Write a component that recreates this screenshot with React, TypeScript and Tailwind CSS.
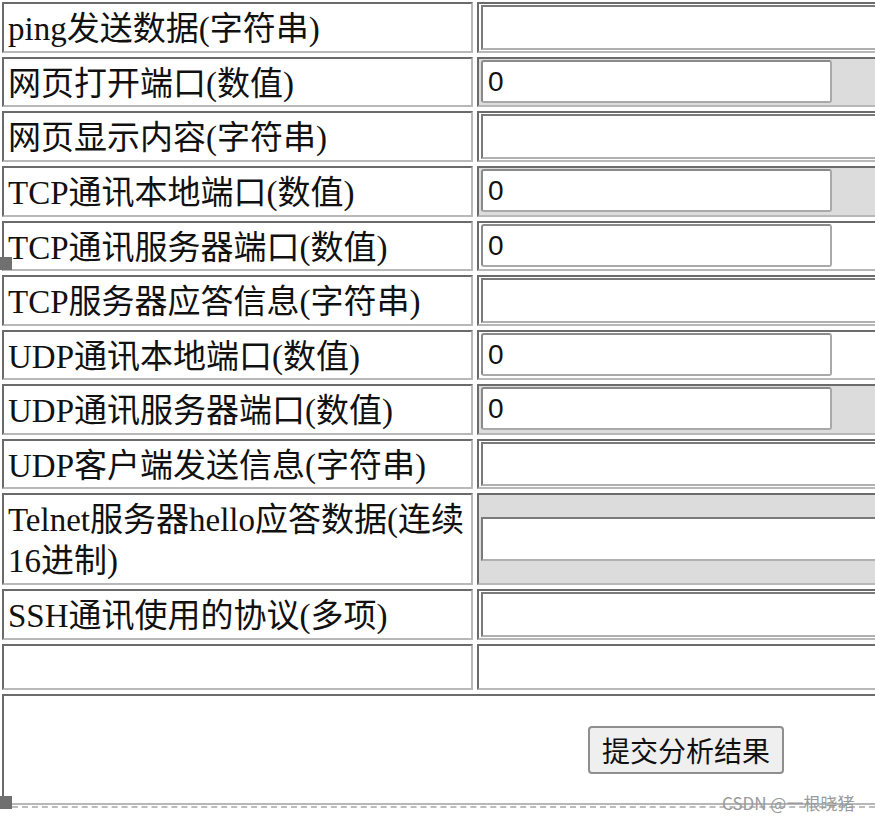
import React from 'react';

type Kind = 'text' | 'num' | 'numGrey' | 'area' | 'empty';

const rows: { label: React.ReactNode; kind: Kind }[] = [
  { label: 'ping发送数据(字符串)', kind: 'text' },
  { label: '网页打开端口(数值)', kind: 'numGrey' },
  { label: '网页显示内容(字符串)', kind: 'text' },
  { label: 'TCP通讯本地端口(数值)', kind: 'numGrey' },
  { label: 'TCP通讯服务器端口(数值)', kind: 'num' },
  { label: 'TCP服务器应答信息(字符串)', kind: 'text' },
  { label: 'UDP通讯本地端口(数值)', kind: 'num' },
  { label: 'UDP通讯服务器端口(数值)', kind: 'numGrey' },
  { label: 'UDP客户端发送信息(字符串)', kind: 'text' },
  {
    label: (
      <>
        Telnet服务器hello应答数据(连续
        <br />
        16进制)
      </>
    ),
    kind: 'area',
  },
  { label: 'SSH通讯使用的协议(多项)', kind: 'text' },
  { label: '', kind: 'empty' },
];

const cell =
  'border-2 border-t-[#6b6b6b] border-l-[#6b6b6b] border-r-[#b8b8b8] border-b-[#b8b8b8]';

const textBox =
  'border-2 border-t-[#7a7a7a] border-l-[#7a7a7a] border-r-[#cfcfcf] border-b-[#b0b0b0] bg-white';

function NumInput() {
  return (
    <div className="w-[351px] h-[43px] mt-[1px] ml-[2px] bg-white rounded-[3px] border-2 border-t-[#8a8a8a] border-l-[#8a8a8a] border-r-[#a9a9a9] border-b-[#a9a9a9] flex items-center pl-[5px] text-[28px] text-[#111] font-['Liberation_Sans',sans-serif]">
      0
    </div>
  );
}

function Field({ kind }: { kind: Kind }) {
  if (kind === 'text')
    return (
      <div className={`${cell} h-full pl-[2px] pt-[1px] pb-[1px]`}>
        <div className={`${textBox} h-full`} />
      </div>
    );
  if (kind === 'num')
    return (
      <div className={`${cell} h-full bg-white`}>
        <NumInput />
      </div>
    );
  if (kind === 'numGrey')
    return (
      <div className={`${cell} h-full bg-[#dcdcdc]`}>
        <NumInput />
      </div>
    );
  if (kind === 'area')
    return (
      <div className={`${cell} h-full bg-[#dcdcdc] flex items-center pl-[2px]`}>
        <div className={`${textBox} h-[44px] w-full`} />
      </div>
    );
  return <div className={`${cell} h-full`} />;
}

export default function App() {
  return (
    <div className="relative w-[875px] h-[823px] overflow-hidden bg-white font-['Liberation_Serif','Noto_Sans_CJK_SC',serif] text-[#111]">
      <div className="pt-[2px] pl-[2px]">
        <div className="w-[1368px] grid grid-cols-[471px_893px] gap-[4px] grid-rows-[51px_50px_51px_51px_50px_51px_50px_51px_50px_92px_51px_46px_111px]">
          {rows.map((r, i) => (
            <React.Fragment key={i}>
              <div className={`${cell} h-full flex items-center pl-[4px] pt-[4px] text-[33px] leading-[41px] whitespace-nowrap overflow-hidden`}>
                <span>{r.label}</span>
              </div>
              <Field kind={r.kind} />
            </React.Fragment>
          ))}
          <div className={`${cell} col-span-2 h-full flex items-center justify-center`}>
            <button className="w-[196px] h-[48px] bg-[#efefef] border-2 border-[#8f8f8f] rounded-[4px] text-[28px] font-['Noto_Sans_CJK_SC',sans-serif] text-[#111] leading-none">
              提交分析结果
            </button>
          </div>
        </div>
        <div className="mt-[1px] w-full border-t-2 border-dashed border-[#bdbdbd]" />
      </div>

      {/* editor handles */}
      <div className="absolute left-0 top-[257px] w-[12px] h-[13px] bg-[#707070]" />
      <div className="absolute left-0 top-[796px] w-[12px] h-[13px] bg-[#707070]" />

      {/* watermark */}
      <div className="absolute left-[722px] top-[793px] text-[17px] text-[#9a9a9a] font-['Noto_Sans_CJK_SC',sans-serif] leading-[20px]">
        CSDN @一根晓猪
      </div>
    </div>
  );
}
